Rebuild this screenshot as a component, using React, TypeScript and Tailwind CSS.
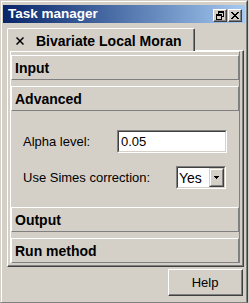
import React from "react";

function Header({ label }: { label: string }) {
  return (
    <div className="h-[25px] shrink-0 border border-t-white border-l-white border-r-[#808080] border-b-[#808080] flex items-center pl-[3px] text-[14px] font-bold text-black leading-none">
      {label}
    </div>
  );
}

function RestoreGlyph() {
  return (
    <svg width="8" height="9" viewBox="0 0 8 9" shapeRendering="crispEdges">
      <rect x="2" y="0" width="6" height="2" fill="#000" />
      <rect x="7" y="2" width="1" height="4" fill="#000" />
      <rect x="6" y="5" width="2" height="1" fill="#000" />
      <rect x="2" y="2" width="1" height="1" fill="#000" />
      <rect x="0" y="3" width="6" height="2" fill="#000" />
      <rect x="0" y="5" width="1" height="4" fill="#000" />
      <rect x="5" y="5" width="1" height="4" fill="#000" />
      <rect x="0" y="8" width="6" height="1" fill="#000" />
    </svg>
  );
}

function CloseGlyph() {
  const rows: [number, number][][] = [
    [[0, 2], [6, 2]],
    [[1, 2], [5, 2]],
    [[2, 4]],
    [[3, 2]],
    [[2, 4]],
    [[1, 2], [5, 2]],
    [[0, 2], [6, 2]],
  ];
  return (
    <svg width="8" height="7" viewBox="0 0 8 7" shapeRendering="crispEdges">
      {rows.map((segs, y) =>
        segs.map(([x, w], i) => (
          <rect key={`${y}-${i}`} x={x} y={y} width={w} height={1} fill="#000" />
        ))
      )}
    </svg>
  );
}

function TitleButton({ children }: { children: React.ReactNode }) {
  return (
    <div className="w-[14px] h-[13px] border border-t-white border-l-white border-r-[#404040] border-b-[#404040] bg-[#d4d0c8]">
      <div className="w-full h-full border-r border-b border-r-[#808080] border-b-[#808080] flex items-center justify-center">
        {children}
      </div>
    </div>
  );
}

export default function App() {
  return (
    <div className="w-[249px] h-[303px] bg-[#d4d0c8] overflow-hidden font-['Liberation_Sans',Arial,sans-serif] text-black">
      <div className="w-[248px] h-[303px] border border-l-[#d4d0c8] border-t-[#d4d0c8] border-r-[#404040] border-b-[#808080]">
        <div className="h-full border-l border-t border-r border-l-white border-t-white border-r-[#808080] flex flex-col">
          {/* Title bar */}
          <div className="mt-[3px] mx-[1px] h-[18px] shrink-0 bg-linear-to-r from-[#0a246a] to-[#a6caf0] flex items-center pl-[5px] pr-[3px]">
            <span className="text-white font-bold text-[13.5px] leading-none">Task manager</span>
            <div className="ml-auto self-start mt-[4px] flex gap-[1px]">
              <TitleButton>
                <RestoreGlyph />
              </TitleButton>
              <TitleButton>
                <CloseGlyph />
              </TitleButton>
            </div>
          </div>

          {/* Tab strip */}
          <div className="h-[27px] shrink-0 pt-[5px] pl-[5px] flex items-start">
            <div className="relative z-10 w-[188px] h-[23px] bg-[#d4d0c8] border-l border-t border-r border-l-white border-t-white border-r-[#404040] rounded-tl-[2px] rounded-tr-[2px] flex">
              <div className="flex-1 border-r border-r-[#808080] flex items-center pl-[8px] pt-[2px]">
                <svg width="8" height="8" viewBox="0 0 8 8">
                  <line x1="0.5" y1="0.5" x2="7.5" y2="7.5" stroke="#000" strokeWidth="1.5" />
                  <line x1="7.5" y1="0.5" x2="0.5" y2="7.5" stroke="#000" strokeWidth="1.5" />
                </svg>
                <span className="ml-[12px] text-[14px] font-bold leading-none">Bivariate Local Moran</span>
              </div>
            </div>
          </div>

          {/* Tab page */}
          <div className="ml-[5px] mr-[2px] h-[217px] shrink-0 border border-l-white border-t-white border-r-[#404040] border-b-[#404040]">
            <div className="h-full border-r border-b border-r-[#808080] border-b-[#808080] px-[2px]">
              <div className="h-[212px] border-l border-t border-r border-l-white border-t-white border-r-[#808080] pt-[3px] flex flex-col">
                <Header label="Input" />
                <div className="h-[6px] shrink-0" />
                <Header label="Advanced" />
                <div className="h-[96px] shrink-0 flex flex-col pt-[19px] pl-[12px] gap-[13px] text-[13px]">
                  <div className="h-[23px] flex items-center pr-[12px]">
                    <span className="leading-none">Alpha level:</span>
                    <div className="ml-auto w-[110px] h-[23px] border border-t-[#808080] border-l-[#808080] border-r-white border-b-white">
                      <div className="w-full h-full border border-t-[#404040] border-l-[#404040] border-r-[#d4d0c8] border-b-[#d4d0c8] bg-white flex items-center pl-[2px] leading-none">
                        0.05
                      </div>
                    </div>
                  </div>
                  <div className="h-[23px] flex items-center pr-[13px]">
                    <span className="leading-none">Use Simes correction:</span>
                    <div className="ml-auto w-[50px] h-[23px] border border-t-[#808080] border-l-[#808080] border-r-white border-b-white">
                      <div className="w-full h-full border border-t-[#404040] border-l-[#404040] border-r-[#d4d0c8] border-b-[#d4d0c8] bg-white flex items-center leading-none">
                        <span className="pl-[1px] text-[14px]">Yes</span>
                        <div className="ml-auto w-[15px] h-full border border-t-[#d4d0c8] border-l-[#d4d0c8] border-r-[#404040] border-b-[#404040] bg-[#d4d0c8]">
                          <div className="w-full h-full border border-t-white border-l-white border-r-[#808080] border-b-[#808080] flex items-center justify-center">
                            <svg width="5" height="3" viewBox="0 0 5 3" shapeRendering="crispEdges">
                              <rect x="0" y="0" width="5" height="1" fill="#000" />
                              <rect x="1" y="1" width="3" height="1" fill="#000" />
                              <rect x="2" y="2" width="1" height="1" fill="#000" />
                            </svg>
                          </div>
                        </div>
                      </div>
                    </div>
                  </div>
                </div>
                <Header label="Output" />
                <div className="h-[6px] shrink-0" />
                <Header label="Run method" />
              </div>
            </div>
          </div>

          {/* Help button */}
          <div className="mt-[2px] pr-[3px] flex justify-end">
            <div className="w-[75px] h-[27px] border border-t-white border-l-white border-r-[#404040] border-b-[#404040]">
              <div className="w-full h-full border-r border-b border-r-[#808080] border-b-[#808080] flex items-center justify-center text-[13px] leading-none">
                Help
              </div>
            </div>
          </div>
        </div>
      </div>
    </div>
  );
}
